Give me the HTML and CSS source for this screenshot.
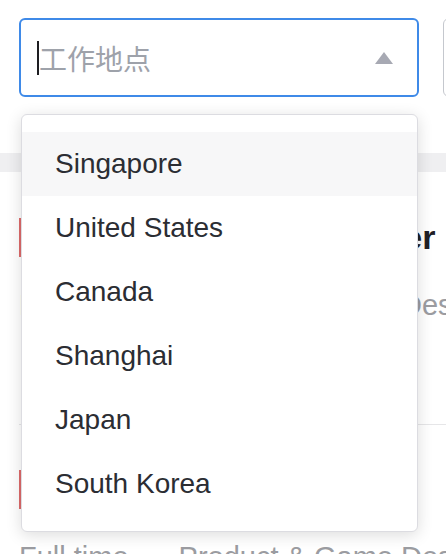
FILE: index.html
```html
<!DOCTYPE html>
<html>
<head>
  <title>Jobs</title>
  <link rel="stylesheet" href="styles.css">
</head>
<body>
  <div class="filters">
    <div class="select open">
      <span class="cursor"></span>
      <span class="placeholder">工作地点</span>
      <svg class="arrow" width="18" height="12" viewBox="0 0 18 12"><path d="M9 0 L18 12 L0 12 Z" fill="#a7a9b3"/></svg>
      <ul class="options">
        <li class="active">Singapore</li>
        <li>United States</li>
        <li>Canada</li>
        <li>Shanghai</li>
        <li>Japan</li>
        <li>South Korea</li>
      </ul>
    </div>
    <div class="select"></div>
  </div>

  <div class="band"></div>

  <div class="jobs">
    <div class="job">
      <div class="job-title">Principal Game Designer</div>
      <div class="job-meta">Full time<span class="sep"></span>Product &amp; Game Designer</div>
    </div>
    <div class="job">
      <div class="job-title">Senior Game Designer</div>
      <div class="job-meta">Full time<span class="sep"></span>Product &amp; Game Design</div>
    </div>
  </div>
</body>
</html>
```

FILE: styles.css
```css
body {
  margin: 0;
  background: #fff;
  font-family: "Liberation Sans", "Noto Sans CJK SC", sans-serif;
  overflow: hidden;
  width: 446px;
  height: 554px;
}

.filters {
  display: flex;
  gap: 24px;
  padding: 18px 0 0 19px;
}

.select {
  position: relative;
  flex: 0 0 auto;
  width: 400px;
  height: 79px;
  box-sizing: border-box;
  border: 1.5px solid #c5c8ce;
  border-radius: 6px;
  display: flex;
  align-items: center;
  padding: 0 24px 0 17px;
}

.select.open {
  border: 2px solid #3f8ae8;
  padding-left: 16px;
}

.cursor {
  width: 2px;
  height: 34px;
  background: #1e1e22;
}

.placeholder {
  flex: 1;
  font-size: 28px;
  color: #9ea2aa;
  font-family: "Noto Sans CJK SC", sans-serif;
}

.arrow {
  display: block;
}

.options {
  position: absolute;
  top: 94px;
  left: 0;
  width: 397px;
  margin: 0;
  padding: 17px 0 15px;
  list-style: none;
  background: #fff;
  border: 1px solid #dcdce1;
  border-radius: 6px;
  box-sizing: border-box;
  box-shadow: 0 3px 16px rgba(0, 0, 0, 0.14);
  z-index: 2;
}

.options li {
  height: 64px;
  line-height: 64px;
  padding-left: 33px;
  font-size: 28px;
  color: #2b2d33;
}

.options li.active {
  background: #f7f7f8;
}

.band {
  height: 19px;
  margin-top: 56px;
  background: #efeff1;
}

.jobs {
  padding: 46px 0 0 19px;
}

.job {
  border-bottom: 1px solid #e6e6e8;
  height: 206px;
}

.job + .job {
  border-bottom: none;
  padding-top: 45px;
}

.job-title {
  border-left: 2px solid #dd6b6b;
  height: 39px;
  line-height: 39px;
  padding-left: 12px;
  font-size: 34px;
  font-weight: bold;
  color: #1f2025;
  white-space: nowrap;
}

.job-meta {
  margin-top: 28px;
  font-size: 29px;
  color: #9b9ca1;
  white-space: nowrap;
  display: flex;
  align-items: center;
}

.sep {
  display: inline-block;
  width: 1px;
  height: 40px;
  background: #e2e2e4;
  margin: 0 25px;
}
```
